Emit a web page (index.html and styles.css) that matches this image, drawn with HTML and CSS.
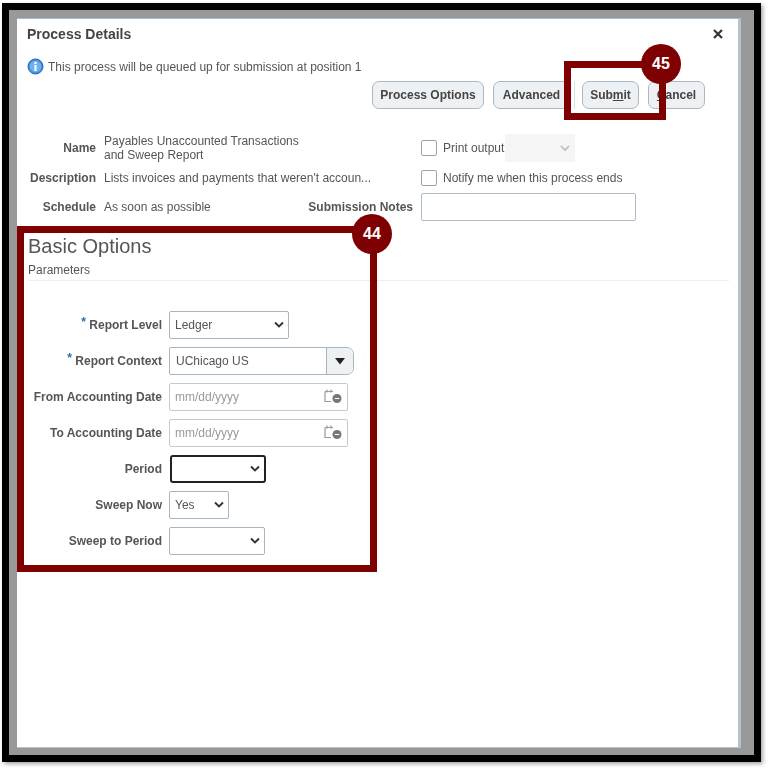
FILE: index.html
```html
<!DOCTYPE html>
<html lang="en">
<head>
<meta charset="utf-8">
<title>Process Details</title>
<link rel="stylesheet" href="styles.css">
</head>
<body>
<div class="frame">
  <div class="dialog">
    <div class="content">
      <div class="title-row">
        <h1 class="title">Process Details</h1>
        <svg class="close" width="12" height="12" viewBox="0 0 12 12"><path d="M2 2l8 8M10 2l-8 8" stroke="#333" stroke-width="2.2" fill="none"/></svg>
      </div>
      <div class="info-row">
        <svg class="info-icon" width="17" height="17" viewBox="0 0 17 17"><circle cx="8.5" cy="8.5" r="7.5" fill="#3d8fe0" stroke="#1f63b0"/><circle cx="8.5" cy="8.5" r="5.8" fill="#6db1ee"/><rect x="7.4" y="7" width="2.2" height="6" fill="#fff"/><rect x="7.4" y="3.8" width="2.2" height="2.2" fill="#fff"/></svg>
        <span>This process will be queued up for submission at position 1</span>
      </div>
      <div class="actions">
        <button class="btn btn-options">Process Options</button>
        <button class="btn btn-advanced">Advanced</button>
        <span class="divider"></span>
        <button class="btn btn-submit">Sub<u>m</u>it</button>
        <button class="btn btn-cancel"><u>C</u>ancel</button>
      </div>
      <div class="details">
        <div class="d-label">Name</div>
        <div class="d-value">Payables Unaccounted Transactions<br>and Sweep Report</div>
        <div></div>
        <div class="d-check">
          <span class="checkbox"></span><span class="check-text">Print output</span>
          <span class="print-select"><svg width="12" height="8" viewBox="0 0 12 8"><path d="M2 2l4 4 4-4" stroke="#bbb" stroke-width="1.6" fill="none"/></svg></span>
        </div>
        <div class="d-label">Description</div>
        <div class="d-value">Lists invoices and payments that weren't accoun...</div>
        <div></div>
        <div class="d-check"><span class="checkbox"></span><span class="check-text">Notify me when this process ends</span></div>
        <div class="d-label">Schedule</div>
        <div class="d-value">As soon as possible</div>
        <div class="d-label">Submission Notes</div>
        <div class="notes"></div>
      </div>
      <section class="basic">
        <h2 class="basic-title">Basic Options</h2>
        <h3 class="param-title">Parameters</h3>
        <div class="form">
          <div class="f-label"><sup>*</sup> Report Level</div>
          <div class="select w-level"><span>Ledger</span><svg class="chev" width="12" height="8" viewBox="0 0 12 8"><path d="M2 1.5l4 4 4-4" stroke="#333" stroke-width="1.9" fill="none"/></svg></div>
          <div class="f-label"><sup>*</sup> Report Context</div>
          <div class="combo"><span class="combo-text">UChicago US</span><span class="combo-btn"><svg width="12" height="8" viewBox="0 0 12 8"><path d="M1 1h10L6 7.500z" fill="#222"/></svg></span></div>
          <div class="f-label">From Accounting Date</div>
          <div class="date"><span>mm/dd/yyyy</span><svg width="18" height="18" viewBox="0 0 18 18"><path d="M1 3.500h8M1 3.500v10h6M3 1.500v3M7 1.500v3" stroke="#999" stroke-width="1.200" fill="none"/><circle cx="13" cy="10.500" r="4.500" fill="#777"/><path d="M10.800 10.500h4.500" stroke="#fff"/></svg></div>
          <div class="f-label">To Accounting Date</div>
          <div class="date"><span>mm/dd/yyyy</span><svg width="18" height="18" viewBox="0 0 18 18"><path d="M1 3.500h8M1 3.500v10h6M3 1.500v3M7 1.500v3" stroke="#999" stroke-width="1.200" fill="none"/><circle cx="13" cy="10.500" r="4.500" fill="#777"/><path d="M10.800 10.500h4.500" stroke="#fff"/></svg></div>
          <div class="f-label">Period</div>
          <div class="select w-period focus"><span></span><svg class="chev" width="12" height="8" viewBox="0 0 12 8"><path d="M2 1.5l4 4 4-4" stroke="#333" stroke-width="1.9" fill="none"/></svg></div>
          <div class="f-label">Sweep Now</div>
          <div class="select w-now"><span>Yes</span><svg class="chev" width="12" height="8" viewBox="0 0 12 8"><path d="M2 1.5l4 4 4-4" stroke="#333" stroke-width="1.9" fill="none"/></svg></div>
          <div class="f-label">Sweep to Period</div>
          <div class="select w-sweep"><span></span><svg class="chev" width="12" height="8" viewBox="0 0 12 8"><path d="M2 1.5l4 4 4-4" stroke="#333" stroke-width="1.9" fill="none"/></svg></div>
        </div>
      </section>
    </div>
  </div>
</div>
<div class="callout box-44"></div>
<div class="badge badge-44">44</div>
<div class="callout box-45"></div>
<div class="badge badge-45">45</div>
</body>
</html>
```
FILE: styles.css
```css
* { box-sizing: border-box; }
html, body { margin: 0; padding: 0; background: #fff; }
body {
  width: 773px;
  height: 776px;
  position: relative;
  overflow: hidden;
  padding: 3px 0 0 2px;
  font-family: "Liberation Sans", Arial, sans-serif;
  font-size: 12px;
  color: #555;
}
.frame {
  width: 759px;
  height: 759px;
  border: 7px solid #000;
  background: #999;
  padding: 8px 13px 7px 8px;
  box-shadow: 2px 2px 4px rgba(0,0,0,.35);
}
.dialog {
  width: 724px;
  height: 730px;
  background: #fff;
  border-right: 3px solid #b4c2cf;
  border-bottom: 1px solid #b4c2cf;
  border-top: 1px solid #a9bccd;
}
.content { filter: blur(0.45px); height: 100%; }
.title-row {
  height: 31px;
  padding: 0 14px 1px 10px;
  display: flex;
  justify-content: space-between;
  align-items: center;
}
.title { margin: 0; font-size: 14px; font-weight: 700; color: #444; }
.close { display: block; }
.info-row {
  margin-top: 8px;
  padding-left: 10px;
  height: 17px;
  display: flex;
  align-items: center;
  gap: 4px;
}
.info-icon { display: block; }
.actions {
  margin-top: 6px;
  display: flex;
  align-items: center;
  padding-left: 355px;
}
.btn {
  height: 28px;
  padding: 0;
  border: 1px solid #a8b8c4;
  border-radius: 7px;
  background: #eef1f4;
  font: 700 12px "Liberation Sans", Arial, sans-serif;
  color: #444;
}
.btn-options { width: 112px; }
.btn-advanced { width: 77px; margin-left: 9px; }
.divider { width: 1px; height: 28px; background: #d8dee3; margin-left: 4px; }
.btn-submit { width: 57px; margin-left: 7px; }
.btn-cancel { width: 57px; margin-left: 9px; }
.details {
  margin-top: 24px;
  display: grid;
  grid-template-columns: 79px 200px 117px 223px;
  grid-template-rows: 30px 28px 28px;
  column-gap: 0;
  row-gap: 1px;
  align-items: center;
}
.d-label { text-align: right; font-weight: 700; color: #555; white-space: nowrap; }
.d-value { padding-left: 8px; line-height: 14px; white-space: nowrap; }
.d-check { display: flex; align-items: center; margin-left: 8px; }
.checkbox { width: 16px; height: 16px; border: 1px solid #98a4ae; border-radius: 2px; background: #fff; }
.check-text { margin-left: 6px; white-space: nowrap; }
.print-select {
  width: 70px;
  height: 28px;
  margin-left: 1px;
  background: #f5f5f5;
  display: flex;
  align-items: center;
  justify-content: flex-end;
  padding-right: 4px;
}
.notes {
  height: 28px;
  margin-left: 8px;
  border: 1px solid #aebbc6;
  border-radius: 2px;
  background: #fff;
}
.basic { margin-top: 13px; padding-left: 11px; }
.basic-title { margin: 0; font-size: 20px; font-weight: 400; color: #555; line-height: 24px; }
.param-title {
  margin: 5px 0 0;
  height: 18px;
  font-size: 12px;
  font-weight: 400;
  color: #555;
  line-height: 14px;
  border-bottom: 1px solid #eee;
  width: 701px;
}
.form {
  margin-top: 30px;
  margin-left: -11px;
  display: grid;
  grid-template-columns: 145px auto;
  grid-auto-rows: 28px;
  row-gap: 8px;
  column-gap: 7px;
  justify-content: start;
  justify-items: start;
  align-items: center;
}
.f-label { justify-self: end; font-weight: 700; white-space: nowrap; color: #555; }
.f-label sup { color: #2a6db0; font-size: 12px; line-height: 0; vertical-align: 3px; }
.select {
  height: 28px;
  border: 1px solid #a8b4be;
  border-radius: 2px;
  display: flex;
  align-items: center;
  justify-content: space-between;
  padding: 0 3px 0 5px;
  background: #fff;
}
.w-level { width: 120px; }
.w-period { width: 96px; margin-left: 1px; }
.w-now { width: 60px; }
.w-sweep { width: 96px; }
.focus { border: 2px solid #222; border-radius: 3px; }
.combo {
  width: 185px;
  height: 28px;
  display: flex;
  border: 1px solid #a8b4be;
  border-radius: 2px 7px 7px 2px;
}
.combo-text { flex: 1; padding-left: 6px; line-height: 26px; }
.combo-btn {
  width: 27px;
  background: #eef1f4;
  border-left: 1px solid #a8b4be;
  border-radius: 0 7px 7px 0;
  display: flex;
  align-items: center;
  justify-content: center;
}
.date {
  width: 179px;
  height: 28px;
  border: 1px solid #c0cbd3;
  border-radius: 2px;
  display: flex;
  align-items: center;
  justify-content: space-between;
  padding: 0 5px 0 5px;
  color: #999;
}
.callout {
  position: absolute;
  border: 7px solid #7f0000;
}
.box-44 { left: 17px; top: 226px; width: 360px; height: 346px; }
.box-45 { left: 564px; top: 61px; width: 102px; height: 59px; }
.badge {
  position: absolute;
  width: 40px;
  height: 40px;
  border-radius: 50%;
  background: #7f0000;
  color: #fff;
  font-size: 16px;
  font-weight: 700;
  display: flex;
  align-items: center;
  justify-content: center;
}
.badge-44 { left: 352px; top: 214px; }
.badge-45 { left: 641px; top: 44px; }
```
